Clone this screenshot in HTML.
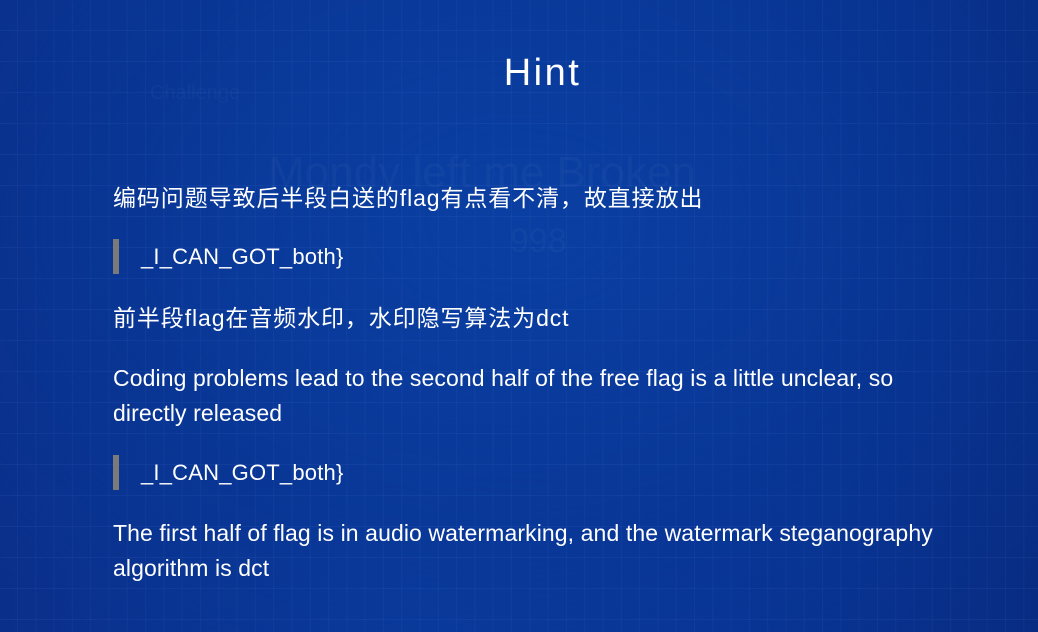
<!DOCTYPE html>
<html><head><meta charset="utf-8"><style>
html,body{margin:0;padding:0;}
body{width:1038px;height:632px;overflow:hidden;position:relative;
background:
 linear-gradient(rgba(120,160,255,0.07) 1px,transparent 1px) 0 30px/100% 31px,
 linear-gradient(90deg,rgba(120,160,255,0.06) 1px,transparent 1px) 17px 0/18.3px 100%,
 radial-gradient(ellipse 70% 80% at 50% 35%,#0a3fa2 0%,#0837968f 60%,transparent 100%),
 linear-gradient(90deg,#0a2f8a,#0a3a9c 40%,#093596 70%,#082c82);
font-family:"Liberation Sans","Noto Sans CJK SC",sans-serif;color:#fff;}
.ghost{position:absolute;color:rgba(255,255,255,0.03);white-space:nowrap;}
h1{position:absolute;left:0;width:1085px;text-align:center;top:50px;margin:0;font-weight:normal;font-size:38px;letter-spacing:2.5px;line-height:46px;}
.t{position:absolute;left:113px;font-size:23px;line-height:30px;white-space:nowrap;letter-spacing:0.1px;}
.c{letter-spacing:0.9px;}
.q{position:absolute;left:113px;width:6px;height:35px;background:#7a7a7a;}
.qt{position:absolute;left:141px;font-size:22px;line-height:30px;letter-spacing:0.2px;}
</style></head><body>
<div class="ghost" style="left:150px;top:82px;font-size:20px">Challenge</div>
<div class="ghost" style="left:268px;top:148px;font-size:44px">Mondy left me Broken</div>
<div class="ghost" style="left:510px;top:222px;font-size:34px">998</div>
<h1>Hint</h1>
<div class="t c" style="top:183px">编码问题导致后半段白送的flag有点看不清，故直接放出</div>
<div class="q" style="top:239px"></div>
<div class="qt" style="top:242px">_I_CAN_GOT_both}</div>
<div class="t c" style="top:303px">前半段flag在音频水印，水印隐写算法为dct</div>
<div class="t" style="top:363px">Coding problems lead to the second half of the free flag is a little unclear, so</div>
<div class="t" style="top:398px">directly released</div>
<div class="q" style="top:455px"></div>
<div class="qt" style="top:458px">_I_CAN_GOT_both}</div>
<div class="t" style="top:518px">The first half of flag is in audio watermarking, and the watermark steganography</div>
<div class="t" style="top:553px">algorithm is dct</div>
</body></html>
